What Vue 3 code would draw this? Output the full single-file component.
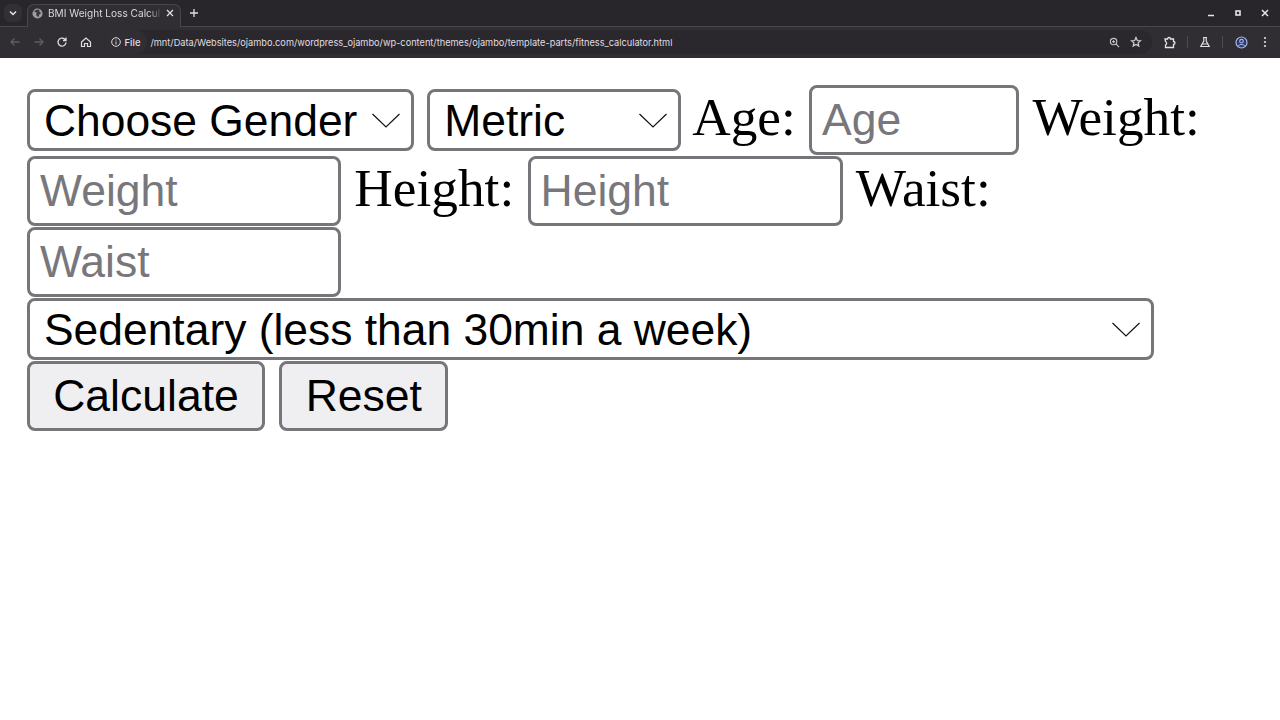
<script setup>
/** Fitness calculator form in a dark browser window. */
const genders = ["Choose Gender", "Male", "Female"];
const systems = ["Metric", "Imperial"];
const activities = ["Sedentary (less than 30min a week)"];
</script>

<template>
  <div class="window">
    <div class="tabstrip">
      <button class="tab-search" aria-label="Search tabs">
        <svg width="10" height="10" viewBox="0 0 10 10"><path d="M2 3.5 5 6.5 8 3.5" fill="none" stroke="#e6e4e8" stroke-width="1.5" /></svg>
      </button>
      <div class="tab">
        <svg width="11" height="11" viewBox="0 0 12 12"><circle cx="6" cy="6" r="5.5" fill="#9f9da2" /><path d="M2 3.5 5 5 4.5 8 7 10 8 7 10 5.5 8 4 8 1.5 5 2Z" fill="#3a383d" /></svg>
        <span class="tab-title">BMI Weight Loss Calcul</span>
        <svg class="tab-close" width="8" height="8" viewBox="0 0 8 8"><path d="M1 1 7 7M7 1 1 7" stroke="#e0dee2" stroke-width="1.3" /></svg>
      </div>
      <svg class="tab-new" width="10" height="10" viewBox="0 0 10 10"><path d="M5 1V9M1 5H9" stroke="#e0dee2" stroke-width="1.3" /></svg>
      <div class="win-controls">
        <svg width="8" height="8" viewBox="0 0 8 8"><path d="M1 6.500H7" stroke="#e6e4e8" stroke-width="1.5" /></svg>
        <svg width="8" height="8" viewBox="0 0 8 8"><rect x="2" y="2" width="4" height="4" fill="none" stroke="#e6e4e8" stroke-width="1.6" /></svg>
        <svg width="8" height="8" viewBox="0 0 8 8"><path d="M1 1 7 7M7 1 1 7" stroke="#e6e4e8" stroke-width="1.5" /></svg>
      </div>
    </div>
    <div class="toolbar">
      <div class="nav">
        <svg width="12" height="12" viewBox="0 0 12 12"><path d="M10.5 6H2M5.5 2.5 2 6l3.5 3.5" fill="none" stroke="#5f5d62" stroke-width="1.3" /></svg>
        <svg width="12" height="12" viewBox="0 0 12 12"><path d="M1.5 6H10M6.5 2.5 10 6 6.500 9.500" fill="none" stroke="#5f5d62" stroke-width="1.3" /></svg>
        <svg width="12" height="12" viewBox="0 0 12 12"><path d="M10 6.500A4 4 0 1 1 8.800 3.200L10 4.500M10 1.500V4.500H7" fill="none" stroke="#e0dee2" stroke-width="1.3" /></svg>
        <svg width="12" height="12" viewBox="0 0 12 12"><path d="M1.500 6 6 2l4.500 4V10.500H7.500V7.500H4.500V10.500H1.500Z" fill="none" stroke="#e0dee2" stroke-width="1.200" /></svg>
      </div>
      <div class="omnibox">
        <span class="origin">
          <svg width="10" height="10" viewBox="0 0 10 10"><circle cx="5" cy="5" r="4.300" fill="none" stroke="#e0dee2" stroke-width="1" /><path d="M5 4.500V7.500M5 2.500V3.500" stroke="#e0dee2" stroke-width="1" /></svg>
          File
        </span>
        <span class="url">/mnt/Data/Websites/ojambo.com/wordpress_ojambo/wp-content/themes/ojambo/template-parts/fitness_calculator.html</span>
        <svg class="omni-icon" width="11" height="11" viewBox="0 0 12 12"><circle cx="5" cy="5" r="3.500" fill="none" stroke="#c8c6ca" stroke-width="1.200" /><path d="M7.500 7.500 11 11M3.500 5H6.500M5 3.500V6.500" stroke="#c8c6ca" stroke-width="1.200" /></svg>
        <svg class="omni-icon" width="12" height="12" viewBox="0 0 12 12"><path d="M6 1.500 7.300 4.500 10.500 4.800 8.100 6.900 8.800 10.100 6 8.400 3.200 10.100 3.900 6.900 1.500 4.800 4.700 4.500Z" fill="none" stroke="#d4d2d6" stroke-width="1.200" /></svg>
      </div>
      <div class="tools">
        <svg width="13" height="13" viewBox="0 0 13 13"><path d="M2 3H4.500C4.500 1 7.500 1 7.500 3H10.500V5.500C12.500 5.500 12.500 8.500 10.500 8.500V11.500H2.500V9C4 8.500 4 6 2.500 5.500Z" fill="none" stroke="#e6e4e8" stroke-width="1.300" /></svg>
        <i class="sep"></i>
        <svg width="12" height="12" viewBox="0 0 12 12"><path d="M4 1.500H8M4.800 1.500V5L1.800 10.500H10.200L7.200 5V1.500M3.500 8H8.500" fill="none" stroke="#e0dee2" stroke-width="1.200" /></svg>
        <i class="sep"></i>
        <svg class="avatar" width="13" height="13" viewBox="0 0 13 13"><circle cx="6.500" cy="6.500" r="5.500" fill="#2f3a63" stroke="#a9b8f0" stroke-width="1.200" /><circle cx="6.500" cy="5.200" r="1.800" fill="none" stroke="#a9b8f0" stroke-width="1.100" /><path d="M3.300 9.800C4.500 8 8.500 8 9.700 9.800" fill="none" stroke="#a9b8f0" stroke-width="1.100" /></svg>
        <svg class="dots" width="4" height="12" viewBox="0 0 4 12"><circle cx="2" cy="2" r="1.100" fill="#e0dee2" /><circle cx="2" cy="6" r="1.100" fill="#e0dee2" /><circle cx="2" cy="10" r="1.100" fill="#e0dee2" /></svg>
      </div>
    </div>

    <form class="calc" @submit.prevent>
      <div class="select-wrap gender">
        <select><option v-for="g in genders" :key="g">{{ g }}</option></select>
        <svg class="chevron" width="28" height="15" viewBox="0 0 28 15"><path d="M.5 1 14 14 27.500 1" fill="none" stroke="#111" stroke-width="1.200" /></svg>
      </div>
      <div class="select-wrap system">
        <select><option v-for="s in systems" :key="s">{{ s }}</option></select>
        <svg class="chevron" width="28" height="15" viewBox="0 0 28 15"><path d="M.5 1 14 14 27.500 1" fill="none" stroke="#111" stroke-width="1.200" /></svg>
      </div>
      <label class="age-label" for="age">Age:</label>
      <input id="age" class="short" type="number" placeholder="Age" />
      <label for="weight">Weight:</label>
      <input id="weight" type="number" placeholder="Weight" />
      <label for="height">Height:</label>
      <input id="height" class="wide" type="number" placeholder="Height" />
      <label for="waist">Waist:</label>
      <input id="waist" type="number" placeholder="Waist" />
      <div class="select-wrap activity">
        <select><option v-for="a in activities" :key="a">{{ a }}</option></select>
        <svg class="chevron" width="28" height="15" viewBox="0 0 28 15"><path d="M.5 1 14 14 27.500 1" fill="none" stroke="#111" stroke-width="1.200" /></svg>
      </div>
      <button type="submit" class="calculate">Calculate</button>
      <button type="reset" class="reset">Reset</button>
    </form>
  </div>
</template>

<style>
html,
body {
  margin: 0;
  background: #fff;
}
</style>

<style scoped>
.window {
  min-height: 720px;
  display: flex;
  flex-direction: column;
}

.tabstrip {
  display: flex;
  align-items: center;
  height: 26px;
  background: #28262a;
  font-family: Inter, "Noto Sans", sans-serif;
  border-bottom: 1px solid #49474c;
}

.tab-search {
  width: 18px;
  height: 18px;
  margin-left: 4px;
  padding: 0;
  border: none;
  border-radius: 6px;
  background: #323035;
  display: flex;
  align-items: center;
  justify-content: center;
}

.tab {
  display: flex;
  align-items: center;
  gap: 4px;
  width: 154px;
  height: 23px;
  margin: 3px 0 -1px 5px;
  padding: 0 6px 5px 4px;
  box-sizing: border-box;
  background: #302e32;
  border: 1px solid #49474c;
  border-bottom: none;
  border-radius: 7px 7px 0 0;
  color: #d9d7db;
  font-size: 10.100px;
}

.tab-title {
  flex: 1;
  margin-left: 1px;
  overflow: hidden;
  white-space: nowrap;
  -webkit-mask-image: linear-gradient(90deg, #000 88%, transparent);
  mask-image: linear-gradient(90deg, #000 88%, transparent);
}

.tab-new {
  margin-left: 8px;
}

.win-controls {
  margin-left: auto;
  margin-right: 11px;
  display: flex;
  gap: 19px;
}

.toolbar {
  display: flex;
  align-items: center;
  height: 30px;
  padding-bottom: 1px;
  background: #302e32;
  font-family: Inter, "Noto Sans", sans-serif;
}

.nav {
  display: flex;
  align-items: center;
  gap: 11.500px;
  padding-left: 9px;
}

.omnibox {
  display: flex;
  align-items: center;
  height: 24px;
  width: 1048px;
  margin-left: 12px;
  background: #2a282c;
  border-radius: 12px;
  font-size: 9.220px;
  color: #e0dee2;
}

.origin {
  display: flex;
  align-items: center;
  gap: 4px;
  height: 100%;
  padding: 0 7px;
  background: #302e32;
  border-radius: 12px;
  font-size: 9.500px;
  font-weight: 500;
}

.url {
  flex: 1;
  padding-left: 3px;
  white-space: nowrap;
}

.omni-icon {
  margin-right: 10px;
}

.tools {
  display: flex;
  align-items: center;
  gap: 11px;
  margin-left: 11px;
}

.avatar {
  margin-left: 1px;
}

.dots {
  margin-left: 4px;
}

.sep {
  width: 1px;
  height: 12px;
  background: #4d4b50;
}

.calc {
  display: flex;
  flex-wrap: wrap;
  align-items: center;
  gap: 1px 13.330px;
  padding: 27px 50px 0 27px;
  font-family: "Liberation Serif", serif;
  font-size: 53.300px;
  color: #000;
}

label {
  line-height: 1;
  margin-bottom: 5px;
}

.age-label {
  margin-left: -2.500px;
}

input,
select,
button {
  box-sizing: border-box;
  margin: 0;
  border: 3px solid #767579;
  border-radius: 8px;
  font-family: "Liberation Sans", sans-serif;
  color: #000;
}

input {
  width: 314px;
  height: 70px;
  padding: 0 10px;
  font-size: 44.500px;
  background: #fff;
  appearance: textfield;
}

input::placeholder {
  color: #78777b;
}

input.short {
  width: 210px;
}

input.wide {
  width: 315px;
}

.select-wrap {
  position: relative;
}

select {
  display: block;
  width: 100%;
  height: 62px;
  padding: 0 14px;
  font-size: 44.400px;
  background: #fff;
  appearance: none;
}

.gender {
  width: 387px;
}

.system {
  width: 254px;
}

.activity {
  width: 1127px;
}

.chevron {
  position: absolute;
  right: 14px;
  top: 24px;
  pointer-events: none;
}

button {
  height: 70px;
  padding: 0;
  font-size: 44.500px;
  background: #efeef1;
}

.calculate {
  width: 238px;
}

.reset {
  width: 169px;
  margin-left: 1px;
}
</style>
